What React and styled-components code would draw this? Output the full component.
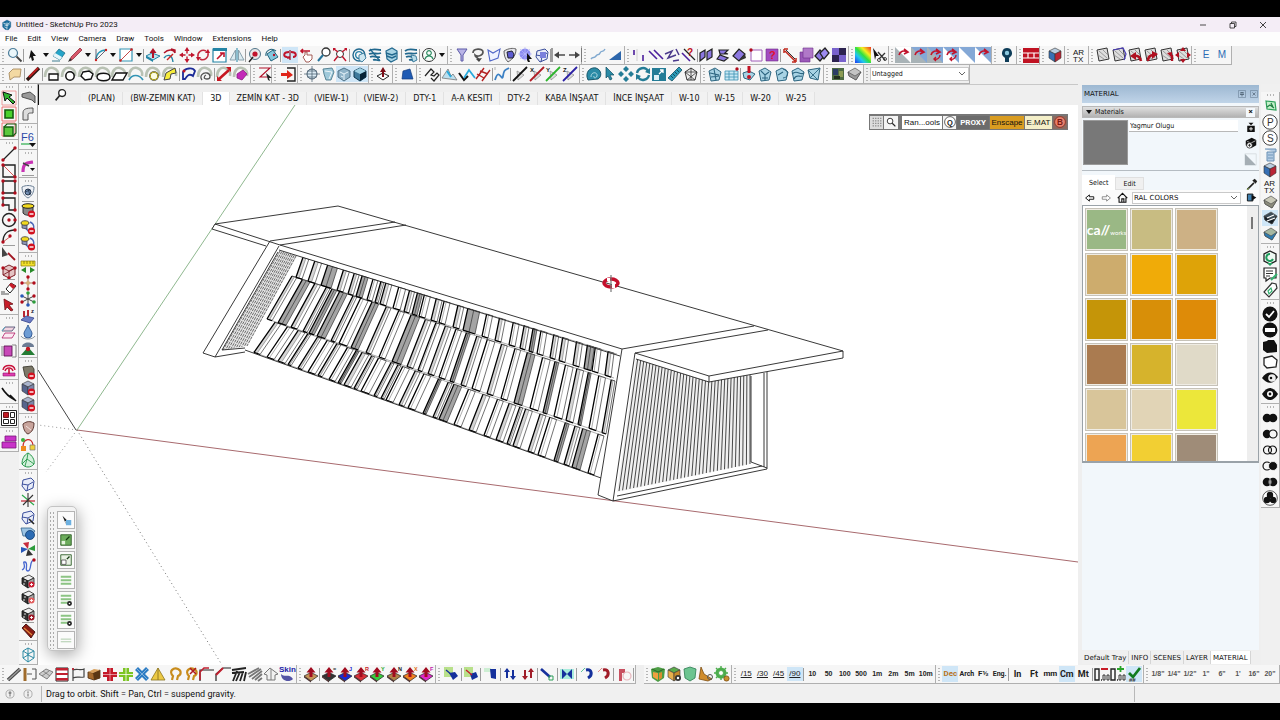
import React from "react";
import styled, { createGlobalStyle, css } from "styled-components";

const GlobalStyle = createGlobalStyle`
  *, *::before, *::after { box-sizing: border-box; }
  html, body { margin: 0; background: #000; }
  body, button, input, select { font-family: Roboto, "Noto Sans", sans-serif; font-size: 8px; color: #111; }
  button { border: 0; padding: 0; margin: 0; background: none; }
  h1, h2 { margin: 0; font-weight: 400; }
`;
const tahoma = '"DejaVu Sans Condensed", "DejaVu Sans", sans-serif';

/* ---------- icon drawing helpers (16 x 16 box) ---------- */
const f = (fill, d) => ({ d, fill });
const s = (stroke, d, w = 1.2) => ({ d, fill: "none", stroke, w });
const fs = (fill, stroke, d, w = 1) => ({ d, fill, stroke, w });
const t = (x, y, text, fill = "#111", size = 7, weight = 700) => ({ text, x, y, fill, size, weight });
const c = (x, y, r) => `M${x - r} ${y}a${r} ${r} 0 1 0 ${2 * r} 0a${r} ${r} 0 1 0 ${-2 * r} 0`;
const box = (x, y, w, h) => `M${x} ${y}h${w}v${h}h${-w}z`;

const push = (col, letter, lc = "#222") => [
  fs(col, "#222", "M1 10l7-3.500 7 3.500-7 5z", 0.7),
  f("#4a3030", "M1 10l7 5v1.500l-7-5z"),
  f("#a00c20", "M6.500 11V6.500H3.500L8 1l4.500 5.500H9.500V11z"),
  ...(letter ? [t(12, 5, letter, lc, 5.5)] : []),
];
const handle = (...parts) => [s("#b9c2b4", "M1 11C1 4 5 1 9 2s6 4 5 8", 2.6), ...parts];
const minus = [f("#d2101f", c(11.5, 12, 3.6)), s("#fff", "M9.500 12h4", 1.4)];
const cube = (a, b, d, st = "#333") => [
  fs(a, st, "M8 1l6 3-6 3-6-3z", 0.6), fs(b, st, "M2 4l6 3v8l-6-4z", 0.6), fs(d, st, "M14 4L8 7v8l6-4z", 0.6),
];
const slab = (a, b) => [fs(a, "#555", "M2 6l7-4 6 4-5 8-7-4z", 0.7), fs(b, "#444", "M2 6l7 4 6-4-5 8-7-4z", 0.6)];
const redDots = (...pts) => pts.map(([x, y]) => f("#b00c1c", c(x, y, 1.7)));
const blueCube = [fs("#e8ecf8", "#3b4f9c", "M3 4l8-2 3 3-1 7-7 3-4-5z", 1), s("#3b4f9c", "M2 8l6 1 5-3M8 9l-1 6", 1)];
const shell = (d) => [fs("#a8d3e4", "#2c6580", "M2 5l6-3 6 4-2 8-8 1z", 1), s("#2c6580", d, 1.1)];
const tornado = [
  s("#21688e", "M2 4c4-3 8-1 12-1M2 7c5-2 7 1 12-1M3 10c4-2 7 1 10 0M6 13c3-1 4 1 7 0", 1.8),
];
const dice = (col) => [
  fs("#eee", "#222", "M2 5l7-3 5 3-6 3z", 0.8), fs("#333", "#111", "M2 5l6 3v7l-6-4z", 0.8), fs("#aaa", "#222", "M14 5L8 8v7l6-4z", 0.8),
  f("#fff", c(5, 8, 0.8) + c(4, 11, 0.8)), f(col, c(11.5, 11.5, 3)), s("#fff", "M10 11.500h3M11.500 10v3", 0.9),
];
const tri = (bg, fg) => [f(bg, box(0, 0, 16, 16)), f(fg, "M0 0L16 16H0z")];
const curlArrow = s("#c0142c", "M4 8c1-4 5-5 8-3M9 2l4 3-4 2", 1.6);
const curlBack = s("#c0142c", "M13 8c0 3-3 5-6 4M9 10l-2 2 2 2", 1.4);
const roughSheet = [fs("#ddd", "#333", "M2 3l10-2 2 11-10 2z", 1), s("#888", "M4 4l8 7M3 8l6 4M8 3l5 5", 0.8)];
const greenTile = [f("#b8e08a", box(1, 1, 9, 10))];

const ICONS = {
  su: [fs("#1b6c9c", "#0d4f7c", "M8 0l6 3v8l-4 5-5-1-4-4V4z", 0.5), s("#fff", "M2 5l6 2 5-3M4 8l4 1 4-2M4 11l4 2M8 4v11", 1)],
  search: [fs("#eaf6fa", "#4f7f9c", c(6, 6, 4.5), 1.2), s("#444", "M9.500 9.500l5 5", 1.8)],
  cursor: [f("#111", "M6 3l5 6-3 0 1 4-2 1-1-4-2 2z")],
  eraser: [fs("#24a4c8", "#12637c", "M8 2l6 4-5 7-7-4z", 0.7), f("#e6f5fa", "M2 9l2-3 7 4-2 3z"), s("#12637c", "M1 14h8", 0.8)],
  pencil: [fs("#d8576a", "#85202e", "M13 1l2 2-9 9-3 2 1-4z", 0.7), f("#333", "M1 15l2-4 2 2z")],
  arc: [s("#2798b7", "M3 13c0-6 4-10 10-10", 1.3), s("#556", "M3 2v11L13 3", 0.9), f("#c22", c(3, 13, 1.2) + c(13, 3, 1.2))],
  rect: [fs("#fff", "#3294b4", box(2, 2, 12, 12), 1.2), s("#b33", "M3 13L13 3", 0.9), f("#c22", c(2.5, 13.5, 1.3) + c(13.5, 2.5, 1.3))],
  pushpull: [fs("#bfe3ee", "#2384a5", "M1 9l6-3 8 3-7 4z", 1), f("#2384a5", "M1 9l7 4v2l-7-4z"), f("#b0142a", "M7 11V6H4.500L8 1l3.500 5H9v5z")],
  offset: [s("#b0142a", "M2 6c5-5 10-3 11 0M9 2l4 1v3", 1.4), s("#2384a5", "M2 11c3-4 8-4 9 4", 1.4), s("#c22", "M5 13l6-6", 1.4)],
  move: [s("#c0142c", "M8 2v12M2 8h12", 1.4), f("#c0142c", "M8 0l2.500 4h-5zM8 16l2.500-4h-5zM0 8l4-2.500v5zM16 8l-4-2.500v5z"), f("#f1f1f1", box(6.5, 6.5, 3, 3))],
  rotate: [s("#c42a3e", "M3 10a5.500 5.500 0 0 1 8-6M13 6a5.500 5.500 0 0 1-8 6", 1.5), f("#c0142c", "M10 6l5 0-2-4zM6 10l-5 0 2 4z")],
  scale: [fs("#fff", "#2384a5", box(1, 2, 13, 13), 1.2), f("#2384a5", box(1, 1, 14, 3)), s("#c0142c", "M5 12l6-6M8 6h4v4", 1.6)],
  flip: [fs("#dcebf0", "#7f99a5", "M1 13L6.500 3v10zM15 13L9.500 3v10z", 0.9), s("#2384a5", "M8 1v14", 1)],
  tape: [fs("#e8e8e8", "#51768a", c(8, 7, 5.5), 1), f("#c0142c", c(8, 7, 2.6)), s("#222", "M2 15l4-5", 1.4)],
  paint: [fs("#84c6dc", "#23637c", "M3 7l6-4 5 7-7 4z", 1), s("#23637c", "M2 9C1 4 7 0 12 4", 1.1), f("#b0142a", c(10, 8, 1.2))],
  orbit: [s("#c0142c", "M7 5C1 5 1 10 5 10M9 5c6 0 6 5 2 5", 2), s("#c0142c", "M5 10.500h3", 2.4), s("#9b1022", "M8 3v10", 1.2)],
  pan: [s("#c0142c", "M2 4h9M4 2L2 4l2 2", 1.6), fs("#fff", "#9a4c46", "M6 8V5h2v3l5 0v4l-3 3H7L4 10z", 0.9)],
  zoom: [fs("#fff", "#333", c(10, 5, 4), 1.3), s("#26749a", "M7 8l-5 6", 2)],
  extents: [fs("#fff", "#333", c(8, 7, 3.5), 1), s("#c0142c", "M2 2l4 3M14 2l-4 3M2 14l4-5M14 14l-4-5", 1.4), f("#c0142c", "M1 1h3L1 4zM15 1h-3l3 3z")],
  wh1: [s("#21688e", c(8, 8, 6), 1.4), s("#2b84ac", c(8, 8, 3.4), 1.4), fs("#cde7f1", "#21688e", "M8 8l5-2 2 5-4 4-3-2z", 0.8)],
  wh2: [...tornado, s("#21688e", "M3 2l10 12", 1.2)],
  wh3: [fs("#a8d3e4", "#21688e", "M2 4l6-3 5 3v8l-6 3-4-3z", 1.2), s("#21688e", "M2 6l6 2 5-2M3 9l5 2 4-2", 1.4)],
  wh4: [...tornado, fs("#b7dbe8", "#21688e", "M8 8l5 1 1 4-4 2z", 0.8)],
  account: [fs("#f6fbf8", "#333", c(8, 8, 6.5), 1), s("#2d8b62", c(8, 6, 2.3) + "M4 12c1-4 7-4 8 0", 1.2)],
  funnel: [fs("#b9b4e6", "#5c5aa8", "M3 2h10l-4 6v6H7V8z", 1)],
  lasso: [s("#555", "M3 6c0-5 10-5 10-1s-6 5-8 3c0 3 4 2 4 6", 1.7), f("#444", "M6 12l6-1-3 4z")],
  poly: [fs("#eff3ff", "#5067c8", "M2 3l5 3 7-4-2 9-8 3z", 1.1)],
  shield: [fs("#e4e4ea", "#555", "M2 4c5-3 9-3 12-2 0 6-3 10-8 13C3 12 2 8 2 4z", 0.9), fs("#5c5ad0", "#223", "M5 5l5-1 2 3-1 4-5 0z", 1)],
  gearsel: [f("#8a8af0", c(7, 7, 5.5)), s("#b9b9f8", "M7 0v14M0 7h14M2 2l10 10M12 2L2 12", 0.7), f("#111", "M9 6l5 6-3 0 1 3-2 0-1-2z")],
  boxsel: [...blueCube, f("#7a80dc", box(6, 5, 6, 6))],
  left: [s("#444", "M1 1v14", 1), s("#555", "M6 8h8", 1.6), f("#444", "M3 8l5-3.500v7z")],
  right: [s("#444", "M15 1v14", 1), s("#555", "M2 8h8", 1.6), f("#444", "M13 8L8 4.500v7z")],
  wave: [s("#7fa8cf", "M1 12c2-3 3 0 5-3s3 0 4-3 3 0 5-4", 1.4)],
  ramp: [f("#2c65aa", "M2 13L14 4v9z")],
  l1: [s("#4b1f9c", "M3 3v5M12 8v6", 1.6), s("#bbb", "M6 2v12", 0.6)],
  l2: [s("#4b1f9c", "M1 4l8 8M6 3l9 9", 1.6)],
  l3: [s("#4b3a8c", "M1 7l7-3-4 7 8-3M9 14l6-1M12 2l3 6", 1.5)],
  l4: [s("#222", "M3 2l11 11", 1.2), s("#4b1f9c", "M1 6l8 8", 1.6), t(6, 9, "?", "#c01020", 10)],
  p1: [fs("#8c78e0", "#222", "M2 6l5-3v7l-5 4zM9 5l5-3v8l-5 3z", 1.2)],
  p2: [fs("#8c78e0", "#222", "M4 3h9l-3 3 3 1H5zM2 12l3-4 8 3-4 3z", 1.2)],
  p3: [fs("#8c78e0", "#222", "M2 9l6-7 6 5-6 7z", 1.2), f("#333", "M8 14l6-7 1 4z")],
  p4: [fs("#fff", "#a05cb8", box(3, 3, 11, 11), 1), redDots([3, 3])[0]],
  p5: [fs("#a24bc0", "#70308c", box(2, 2, 12, 12), 0.6), t(5, 12, "?", "#e01030", 11)],
  q1: [s("#333", "M4 3l9 9", 1), s("#c0281c", "M3 4l10 10M2 2l0 4M2 2h4M14 15v-4M14 15h-4", 1.5)],
  q2: [fs("#9a58b8", "#6b2c8c", box(2, 5, 10, 10), 0.6), fs("#b078c8", "#6b2c8c", box(5, 1, 10, 10), 0.6)],
  q3: [fs("#8c78e0", "#222", "M1 9l5-6 5 5-5 6z", 1.3), fs("#9c8af0", "#222", "M6 6l5-5 4 5-5 6z", 1.3)],
  q4: [f("#7862cc", box(1, 1, 14, 14)), f("#2c2350", box(8, 1, 7, 7) + box(1, 8, 7, 7))],
  scissors: [f("#111", "M2 1l6 8-3 0-1 4z"), s("#333", "M7 5l7 8M14 6l-6 6", 1.3), s("#333", c(14, 12, 1.5) + c(8, 13, 1.5), 0.9)],
  t1: [...tri("#fff", "#a9b3b7"), curlArrow],
  t2: [...tri("#84a8d6", "#a9b3b7"), curlArrow],
  t3: [...tri("#84a8d6", "#a9b3b7"), curlArrow, curlBack],
  t4: [...tri("#84a8d6", "#fff"), curlArrow, curlBack],
  t5: tri("#84a8d6", "#fff"),
  t6: [...tri("#84a8d6", "#fff"), curlArrow],
  pin: [f("#0d3c58", "M8 1a5 5 0 0 1 3 9l-1 1v4H6v-4l-1-1a5 5 0 0 1 3-9z"), f("#8cc9df", c(8, 6, 2.2))],
  brick: [f("#c01222", box(0, 1, 16, 15)), s("#fff", "M0 6h16M0 11h16M5 6v5M11 6v5", 1.2)],
  rgbcube: cube("#b9cde0", "#376fb4", "#ba2434"),
  artx: [t(2, 8, "AR", "#111", 8, 500), t(2, 15, "TX", "#111", 8, 500)],
  sheet: roughSheet,
  sheet2: [...roughSheet, s("#4b3fb8", "M2 3l10-2 3 6-2 6", 1.2)],
  sheet3: [...roughSheet, s("#b01020", "M14 14c-1-4-3-6-7-5", 2.6), f("#b01020", "M3 9l6-4v8z")],
  sheet4: [...roughSheet, s("#b01020", "M5 14c0-4 2-6 6-6", 2.6), f("#b01020", "M15 7L9 4v8z")],
  sheet5: [...roughSheet, s("#b01020", "M13 14V8", 2.4), f("#b01020", "M13 5v6L8 6z")],
  sheet6: [...roughSheet, f("#b01020", "M8 0l3 4H5zM8 16l3-4H5zM0 8l4-3v6zM16 8l-4-3v6z")],
  fold: [fs("#f3d9a2", "#a88b60", "M2 7l4-4 8 0-1 8-6 0-4 3z", 0.9)],
  redpen: [s("#2e1713", "M2 14L14 2", 3.4), s("#ba2020", "M4 11L13 2", 2)],
  hRect: handle(fs("#fff", "#111", box(5, 8, 9, 6), 1.3)),
  hCircle: handle(fs("#fff", "#111", c(9, 10, 4.2), 1.5)),
  hHex: handle(fs("#fff", "#111", "M5 6l6-1 4 3-2 5-6 1-4-4z", 1.4)),
  hEllipse: handle(fs("#fff", "#111", "M2 11c0-5 13-5 13 0s-13 5-13 0", 1.4)),
  hPara: handle(fs("#fff", "#111", "M5 7h11l-4 7H1z", 1.4)),
  hArc: handle(s("#3294b4", "M1 14c3-6 10-6 14 0", 1.7)),
  hYellow: handle(fs("#fdfce0", "#333", c(9, 10, 4), 1.6), s("#e6d41e", c(9, 10, 4), 0.8)),
  hYarrow: handle(fs("#f6ec3b", "#444", "M2 14l2-7 9-5 1 5-5 1-1 5z", 1)),
  blueLoop: [s("#1c2c98", "M2 13V6c2-4 10-5 12-1l-2 5c-4-3-6 0-8 3z", 1.8), f("#c01020", c(3, 5, 1.5))],
  spiral: handle(s("#555", "M5 14c-3-4 1-8 5-7s4 6 0 6-3-3-1-4", 1.3)),
  redArrow: handle(s("#c61620", "M3 13L13 4", 2.6), f("#c61620", "M10 1h5v5zM1 10v5h5z")),
  magenta: handle(fs("#c32ab8", "#861d80", "M4 8l6-4 4 4-5 6-5-2z", 0.8)),
  zline: [s("#b01028", "M2 2h11L3 11h9", 1.1), f("#222", "M9 7l6 5-3 0 1 3-2-1z")],
  importRed: [s("#222", "M7 2h8v13H7", 1.4), f("#df2418", "M1 7h6V4l6 5-6 4v-3H1z")],
  target: [fs("#dcebf5", "#445a6c", c(8, 8, 5), 1), s("#445a6c", "M0 8h16M8 0v16M3 5h10M3 11h10", 0.7)],
  solid1: [fs("#9fc9da", "#4d7a8c", "M3 3l9-1 2 4-3 8-5 0-2-6z", 0.9), s("#fff", "M5 5l7 1-3 7", 0.8)],
  solid2: [fs("#8fb3c8", "#44667c", "M2 5l6-3 6 3v6l-6 4-6-4z", 0.9), s("#e8f4fa", "M4 6l4 2 4-2M8 8v6M5 10l2 1", 1)],
  solid3: [fs("#3f7a9c", "#0e3850", "M2 5l6-3 6 3v6l-6 4-6-4z", 1), f("#072436", "M8 8l6-3v6l-6 4z"), f("#a2d2e4", "M2 5l6-3 6 3-6 3z")],
  ppDark: [fs("#fff", "#222", "M2 10l6-3 6 3-6 4z", 1), f("#7c0f18", "M7 11V6H5l3-5 3 5H9v5z")],
  bluebook: [fs("#1f5bb4", "#123b7c", "M4 5l7-2 3 10H3z", 0.7)],
  steps: [s("#222", "M1 10l6-7 3 3-3 3 3 1 3-3 2 2-5 6-3-3", 1.2)],
  mtn1: [fs("#bcdfee", "#777", "M0 12L6 3l3 7 2-2 4 6z", 0.8), s("#29a9dc", "M5 5l4 6", 2)],
  mtn2: [s("#111", "M0 7l5 7 4-4", 2), s("#29a9dc", "M5 12l5-8 6 8", 1.8)],
  ladder: [s("#b42020", "M1 13L9 2M7 15l8-11M2 8l7 4M5 5l8 3", 1.4)],
  curve: [s("#3c80c4", "M1 14c4-14 7 3 8-4s3-6 6-8", 1.8), s("#888", "M1 1v3", 0.6)],
  ax0: [fs("#ddd", "#888", "M5 5l7 4-6 5z", 0.7), s("#111", "M1 15L15 1", 1.8)],
  axX: [fs("#ddd", "#888", "M5 5l7 4-6 5z", 0.7), s("#b01c24", "M1 15L15 1", 1.8), t(1, 6, "X", "#111", 6)],
  axY: [fs("#ddd", "#888", "M5 5l7 4-6 5z", 0.7), s("#2db42d", "M1 15L15 1", 1.8), t(1, 6, "Y", "#111", 6)],
  axZ: [fs("#ddd", "#888", "M5 5l7 4-6 5z", 0.7), s("#2c20a4", "M1 15L15 1", 1.8), t(1, 6, "Z", "#111", 6)],
  snail: [fs("#2b8ba6", "#104e62", "M1 11C0 4 6 1 10 2c6 2 6 9 2 11L2 14z", 0.9), s("#c9e8f0", "M5 11c0-6 7-5 6-1-1 3-4 2-3 0", 0.8)],
  tealCursor: [fs("#2b8ba6", "#104e62", "M4 1l8 8-4 0 2 4-2 1-2-4-2 2z", 0.7)],
  tealMove: [f("#247c96", "M8 0l3 3-3 3-3-3zM8 10l3 3-3 3-3-3zM3 5l3 3-3 3-3-3zM13 5l3 3-3 3-3-3z")],
  tealRot: [s("#247c96", "M2 7c1-5 8-7 11-2M14 9c-1 5-8 7-11 2", 2.4), f("#247c96", "M15 2v6l-5-2zM1 14V8l5 2z")],
  tealScale: [f("#247c96", box(1, 2, 14, 13)), f("#dff0f5", box(3, 9, 5, 5)), s("#fff", "M8 8l4-4M9 4h3v3", 1.3)],
  tealRuler: [fs("#2b9bb8", "#104e62", "M1 12L12 1l3 3L5 15z", 0.8), s("#0b3a4a", "M4 10l2 2M6 8l2 2M8 6l2 2M10 4l2 2", 0.8)],
  wire: [fs("#eee", "#222", "M2 6l6-4 6 4-2 8H4z", 0.9), s("#333", "M2 6l10 8M14 6L4 14M8 2v12M2 6h12", 0.8)],
  sh1: shell("M3 7l9 2M4 11l8-1M7 3l2 11"),
  sh2: [fs("#c9e8f4", "#3c92b4", "M1 5h13v9H1z", 0.8), s("#3c92b4", "M1 8h13M1 11h13M5 5v9M10 5v9", 0.8), ...redDots([13, 3])],
  sh3: [fs("#a8d3e4", "#2c6580", "M2 7l6-2 6 3-5 6-6-2z", 1), f("#c21224", "M6.500 0h3v7h-3z" + c(8, 11, 2))],
  sh4: shell("M4 5l4 4 4-3M8 9v5M5 12h6"),
  sh5: shell("M9 3a4 4 0 0 1 0 9M4 9l5-3"),
  sh6: shell("M2 8c5-5 8 2 12-1M4 13c2-5 5-2 8-3"),
  sh7: [fs("#a8d3e4", "#2c6580", "M2 4l12-2-2 12-8-2z", 1), s("#2c6580", "M14 2L4 12M2 4l10 10", 0.9)],
  photo: [f("#4d6b43", box(2, 2, 12, 12)), f("#2c3e66", box(3, 3, 5, 6)), f("#8c9c54", box(9, 5, 4, 6)), f("#23301f", box(4, 10, 6, 3))],
  greySlab: slab("#c4c4c4", "#9a9a9a"),

  greenCursor: [s("#e88", box(1, 1, 14, 14), 0.8), fs("#2fb52f", "#111", "M2 2l9 3-3 2 6 5-2 2-6-6-2 3z", 1)],
  greenSq: [s("#e66", box(1, 1, 14, 14), 0.9), fs("#4cd02c", "#165c10", box(4, 4, 8, 8), 1.6)],
  greenSq2: [s("#e66", box(1, 1, 13, 13), 0.9), fs("#5bc83c", "#165c10", box(3, 5, 9, 9), 1.4), s("#165c10", "M3 5l3-3h9v9l-3 3", 1.1)],
  lineDot: [s("#222", "M2 14L14 2", 1.3), ...redDots([2, 14], [14, 2])],
  sqDiag: [s("#222", box(2, 2, 12, 12), 1.4), s("#c44", "M2 2l12 12", 0.9), ...redDots([2, 2], [14, 14])],
  sqDots: [s("#222", box(2, 2, 12, 12), 1.4), ...redDots([2, 2], [14, 2], [2, 14], [14, 14])],
  lShape: [s("#222", "M2 2h12v12H8V9H2z", 1.3), ...redDots([2, 9], [14, 14], [2, 2])],
  circDot: [s("#222", c(8, 8, 6.5), 1.4), ...redDots([8, 8], [14, 8])],
  arcDot: [s("#222", "M2 14C2 6 7 2 14 2", 1.4), s("#c44", "M2 14L10 8", 0.9), ...redDots([2, 14], [14, 2], [9, 8])],
  slashArrow: [f("#444", "M1 1l6 8-6 2z"), s("#a01420", "M7 7l7 7", 1.8)],
  cageRed: [fs("#e4c4c4", "#7c1c24", "M2 5l6-3 6 3v7l-6 3-6-3z", 1), s("#7c1c24", "M2 5l6 3 6-3M8 8v7M2 12l12-7", 0.9), ...redDots([2, 5], [14, 5], [8, 15])],
  eraserDark: [fs("#fff", "#222", "M5 9l5-6 5 3-6 7z", 1), f("#c81c28", "M10 3l5 3-3 3-4-4z"), s("#555", "M0 14h8M0 12h4", 1)],
  redCursor: [fs("#c81c28", "#6c1016", "M3 2l9 5-4 1 4 5-2 1-4-4-2 3z", 0.8)],
  layers: [fs("#f1d4e0", "#557", "M4 3h10l-3 4H1z", 0.9), fs("#fbe9f2", "#a05", "M4 9h10l-3 5H1z", 0.7), s("#5aa9c4", "M1 7l3-4", 1)],
  magBox: [fs("#c848b8", "#5c1450", box(3, 3, 8, 10), 0.9), s("#777", "M11 2h4v12h-4M1 3v10", 0.9)],
  magPaint: [s("#c8143c", "M2 8c1-6 11-6 12 0M4 9c1-4 7-4 8 0", 1.4), fs("#e03cb0", "#8a1468", "M2 11h12v3H2z", 0.6), s("#c8143c", "M8 7v5", 1.6)],
  arcPen: [s("#111", "M1 2c3 5 7 9 13 12M9 9l6 6", 1.6)],
  redGrid: [fs("#fff", "#222", box(0.5, 0.5, 15, 15), 1), fs("#c01822", "#6c1016", box(2.5, 2.5, 5, 5), 1), s("#222", box(9.5, 2.5, 4, 5) + box(2.5, 9.5, 5, 4) + box(9.5, 9.5, 4, 4), 1)],
  magRects: [fs("#c832c8", "#7a187a", "M4 2h11v5H4zM1 8h14v6H1z", 0.8)],

  sheet7: [fs("#9a9a9a", "#444", "M2 4l8-2 5 4v7l-3-3-10-3z", 0.9)],
  pipe: [fs("#ddd", "#555", "M3 14V7c0-4 3-5 10-5v5c-4 0-5 0-5 2v5z", 1)],
  f6: [t(1, 9, "F6", "#2c48a8", 11, 500), s("#2cae4c", "M1 12h9", 1.2), f("#111", "M9 11h7l-3.500 4z")],
  magHose: [s("#c832b4", "M3 14C3 5 6 5 13 4", 3.2), s("#444", "M3 5l6 3", 1.5), f("#111", "M10 10h5l-2.500 3z")],
  shieldBlue: [fs("#eef1f6", "#6b7f94", "M2 3c4-2 8-2 12 0 0 5-2 9-6 11C4 12 2 8 2 3z", 1), fs("#7490b4", "#26364c", c(8, 8, 3), 1), s("#26364c", "M5 8l5-2M8 5l2 6", 0.8)],
  canMinus: [fs("#888", "#222", "M3 4v7c2 3 8 3 10 0V4z", 0.9), fs("#f1d81e", "#222", "M2 4c0-3 12-3 12 0s-12 3-12 0", 1), ...minus],
  canMinus2: [s("#4d68b8", "M10 3c5 2 4 6 3 10M4 7l5 6", 1.4), fs("#8a93b4", "#334", "M2 4v5l5 1V4z", 0.7), fs("#f1d81e", "#333", "M1 4c0-3 8-3 8 0s-8 3-8 0", 0.8), ...minus],
  rulerY: [fs("#f2e02a", "#8a7a10", box(1, 2, 14, 5), 0.7), s("#6c5f0c", "M4 2v3M7 2v3M10 2v3M13 2v3", 0.7), f("#288a28", "M1 11l5-3v6zM15 11l-5-3v6z")],
  crossRed: [s("#b06c50", "M8 2v12M2 8h12", 1), ...redDots([8, 2], [8, 14], [2, 8], [14, 8]), f("#d8b078", c(8, 8, 2))],
  crossMulti: [s("#444", "M8 2v12M2 5l12 6M14 5L2 11", 1), f("#2c9c3c", c(8, 2, 1.8) + c(14, 11, 1.8)), f("#2858b8", c(2, 5, 1.8) + c(8, 14, 1.8)), ...redDots([14, 5], [2, 11])],
  terrainZ: [fs("#6c7cc4", "#33438c", "M1 12l5-4 8 2-4 5z", 0.8), s("#b01020", "M4 3v6M8 2v6", 1.8), t(11, 5, "z", "#223", 6)],
  drop: [fs("#6d9cd4", "#2c5490", "M8 1c2 5 4 6 4 9a4 4 0 0 1-8 0c0-3 2-4 4-9z", 0.9), s("#8894a0", "M1 12c2 4 12 4 14 0", 1)],
  tree: [f("#6c7c94", "M2 7c0-6 12-6 12 0z"), f("#247c34", "M1 15l7-8 7 8z"), f("#c01822", c(8, 9, 2.2))],
  bagMinus: [fs("#7c7868", "#3c3a30", "M3 3l9-1 2 3v7c-3 3-7 3-9 0z", 0.9), ...minus],
  cubeMinus: [...cube("#aab4cc", "#56648c", "#7c88ac"), ...minus],
  redShield: [fs("#c8a49c", "#5c3a34", "M3 4c4-3 7-3 11-1 0 6-2 9-6 11-3-1-5-6-5-10z", 1), s("#f1e0dc", "M6 6l5 4", 1)],
  orangePath: [s("#cc2c2c", "M3 11C3 2 12 1 13 9", 1.2), f("#ee8a1c", box(1, 10, 5, 5)), f("#38b038", c(3, 4, 2)), fs("#f1d23c", "#777", box(10, 9, 5, 5), 0.7)],
  greenEgg: [fs("#d4f1dc", "#28984c", "M8 1c4 2 7 7 6 11-3 4-9 4-12 0C2 7 4 3 8 1z", 1), s("#28984c", "M2 12l5-5 7 5M7 7l1-6M5 14l2-7", 0.9)],
  bcube: blueCube,
  bcube2: [...blueCube, s("#222", "M9 10l5 5", 1.6)],
  starAxes: [s("#2ca84c", "M2 3l12 10", 1.2), s("#c02030", "M1 9h14", 1.2), s("#333", "M8 1v14M13 3L3 13", 1.1)],
  blueSphere: [fs("#9cc4e4", "#36648c", "M1 3h10l4 3-4 5H3z", 0.8), fs("#2c6cb4", "#123c70", c(10, 10, 4.5), 0.8)],
  fan: [f("#c82c3c", "M8 8L3 2l6-1z"), f("#2c9c3c", "M8 8l7-4v6z"), f("#2858b8", "M8 8L1 6v6z"), f("#333", "M8 8l5 6-7 1z")],
  blueWave: [s("#4868d0", "M2 13c6-3-1-9 3-8s-1 9 3 9 1-11 6-11", 1.3), ...redDots([14, 3])],
  dice1: dice("#c81c30"), dice2: dice("#e05c5c"), dice3: dice("#9c1424"),
  brown: [fs("#8c1c14", "#3c100c", "M2 5l4-4 9 8-4 6z", 0.9), s("#e08c3c", "M4 5l8 7", 1.1)],
  cyanBox: [s("#2f8ba4", "M3 4l5-3 6 3-6 3zM3 4v3M3 11l5-3 6 3-6 4zM3 7v4M14 4v7M8 7v8M8 1v7", 1)],

  gTile: [fs("#c4f0ca", "#2ca058", "M4 3l9 1 1 8-9-1z", 1.2), s("#1e7c40", "M5 9l3-2 4 3M9 5l2 4", 1.2)],
  letterP: [fs("#fff", "#444", c(8, 8, 7.2), 1), t(5, 12, "P", "#333", 10, 500)],
  letterS: [fs("#fff", "#444", c(8, 8, 7.2), 1), t(5, 12, "S", "#333", 10, 500)],
  scroll: [fs("#b4cce4", "#6a90b4", "M3 3h11v3H5v9h7V6", 1), s("#6a90b4", "M6 9h5M6 12h5", 0.9)],
  slabA: slab("#c9c9b8", "#8c8c7c"), slabB: [...slab("#3c4c58", "#141c24"), s("#fff", "M5 8l7-3M5 11l8-3", 1.2)], slabC: slab("#a6b7a0", "#2f7cb0"),
  greenHex: [fs("#eef8f2", "#222", "M8 1l6 3v7l-6 3-6-3V4z", 1.3), s("#1e9c5c", "M8 4a3.500 3.500 0 1 0 3 5", 2), f("#1e9c5c", "M5 13h6l-3 3z")],
  listPen: [fs("#fff", "#222", "M2 2h12v10H8l-4 3v-3H2z", 1.2), s("#333", "M4 5h7M4 7.500h7M4 10h4", 1), s("#34b070", "M9 14l6-6", 2)],
  tagGreen: [fs("#fff", "#333", "M10 1l4 1 1 4-8 9-5-5z", 1.2), s("#34b070", "M6 9l3-3 1 3-3 3z", 1.2)],
  checkDisc: [f("#111", c(8, 8, 7.5)), s("#fff", "M4 8l3 3 5-6", 1.8)],
  minusDisc: [f("#111", c(8, 8, 7.5)), f("#fff", box(3, 6, 10, 4))],
  tagBlack: [f("#111", "M1 4l4-1 1-1 6 0 3 5v7l-10 1-4-3z")],
  tagWhite: [fs("#fff", "#222", "M2 4l8-2 5 4-1 7-9 1-3-3z", 1.3)],
  eye1: [f("#111", "M0 8c5-7 11-7 16-1-5 8-11 7-16 1z"), f("#eee", c(10, 8, 3.8)), f("#111", c(9, 8, 1.3))],
  eye2: [f("#111", "M0 8c5-8 11-8 16 0-5 8-11 8-16 0z"), f("#fff", c(8, 8, 3)), f("#111", c(8, 8, 1.4))],
  union: [f("#111", c(5, 8, 4.3) + c(11, 8, 4.3))],
  sub1: [f("#111", c(5, 8, 4.2)), fs("#f5f5f5", "#111", c(11, 8, 4), 1.2)],
  inter: [s("#111", c(5.5, 8, 4), 1.2), s("#111", c(10.5, 8, 4), 1.2)],
  sub2: [s("#111", c(5, 8, 4), 1.2), fs("#111", "#fff", c(11, 8, 4.5), 0.8)],
  split: [f("#111", c(5, 8, 4.3) + c(11, 8, 4.3)), fs("#fff", "#fff", "M8 5c1.500 2 1.500 4 0 6-1.500-2-1.500-4 0-6z", 0.5), s("#111", "M8 5v6", 0.8)],
  tri3: [fs("#fff", "#444", c(8, 8, 7.3), 0.9), f("#111", c(8, 5, 3.2) + c(5, 10, 3.2) + c(11, 10, 3.2))],

  stair: [s("#444", "M2 14L14 3", 3.6), s("#999", "M2 14L14 3", 1.6)],
  chair: [s("#a06c2c", "M3 2v13", 3), s("#555", "M5 8h5M14 3v10M10 3h4M10 13h4", 1.1)],
  isoGrey: [fs("#ccc", "#777", "M1 8l7-5 7 3-6 7z", 0.9), s("#777", "M5 5l7 5M4 10l7-5", 0.8)],
  redRows: [fs("#fff", "#222", box(2, 2, 12, 13), 1), f("#c02030", box(2, 2, 12, 2.5) + box(2, 7, 12, 2) + box(2, 12, 12, 2.5))],
  flag: [s("#444", "M3 2v13M3 4c4-2 7 1 11-1v8c-4 1-7-1-11 1", 1.2), f("#c02030", c(3, 3, 1.1))],
  crate: [fs("#a4692c", "#4c2c10", "M2 6l5 1 7-3v8l-6 2-6-2z", 0.8), f("#5a3614", "M7 7l7-3v8l-6 2z"), f("#d8a05c", "M2 6l6-3 6 1-7 3z")],
  redPlus: [f("#c41828", "M5 2h6v4h4v5h-4v4H5v-4H1V6h4z"), s("#fff", "M1 8.500h14M8 2v13", 0.5)],
  greenPlus: [f("#7cc424", "M5 2h6v4h4v5h-4v4H5v-4H1V6h4z"), s("#fff", "M1 8.500h14M8 2v13", 0.8)],
  bluePlus: [f("#2c7cc4", "M4 1l4 4 4-4 3 3-4 4 4 4-3 3-4-4-4 4-3-3 4-4-4-4z"), s("#fff", "M3 3l10 10M13 3L3 13", 0.4)],
  yTri: [fs("#ecc944", "#8c7420", "M8 2l7 12H1z", 0.8), s("#8c7420", "M8 2v12", 0.9)],
  hook: [s("#c88c1c", "M5 14l1-4C1 5 7 1 11 3s3 6 0 7l-1 4", 2.2)],
  hookX: [s("#c88c1c", "M5 14l1-4C1 5 7 1 11 3s3 6 0 7l-1 4", 2.2), s("#b01820", "M7 2l6 6M13 2L7 8", 1.5)],
  bend1: [s("#222", "M1 15V4h14", 1.2), s("#c02030", "M1 14V6l4-4h5", 1.6)],
  bend2: [s("#222", "M1 15V8l7-6h8", 1.2), s("#c02030", "M1 9l7-7", 2)],
  hatch1: [s("#222", "M1 4l14-2M1 7l12-1M2 15L6 5M5 15l4-9M9 15l3-9M13 15l2-9", 1.8)],
  hatch2: [s("#777", "M1 8L12 2M2 11L14 3M5 13l10-8M8 14l7-6M11 15l4-3", 1.8)],
  roof: [fs("#f1f1f1", "#777", "M1 8l6-6 8 6-3 1v5H4V9z", 1), s("#777", "M8 3v11", 0.9)],
  skin: [f("#5454a4", "M2 8c4 4 8-1 12 5-4 4-12 2-12-5z"), t(0, 6, "Skin", "#1c1ca8", 8)],
  pp0: push("#c49458"), pp1: push("#333", "=", "#111"), pp2: push("#1c28d0", "J", "#1c28d0"), pp3: push("#d83038", "R", "#c81c28"),
  pp4: push("#38cc3c", "Y", "#1ca828"), pp5: push("#b08048", "N", "#222"), pp6: push("#f08020", "X", "#e06c10"), pp7: push("#e028c8", "F", "#c018a8"),
  v1: [...greenTile, f("#15309c", "M6 7l6-1 3 4-5 4z"), s("#15309c", "M3 4l6 5", 1.4)],
  v2: [...greenTile, f("#15309c", "M7 8l6-2 2 5-6 3z"), s("#c81c28", "M3 4l6 5", 1.4)],
  v3: [f("#cdeed3", box(1, 2, 7, 4)), f("#15309c", "M7 3h6v10l-5-1z")],
  v4: [s("#15309c", "M5 3v9M11 4v9", 2), f("#15309c", "M2 6l3-4 3 4zM8 10h6l-3 4z")],
  v5: [s("#a01c28", "M5 4v9M11 3v9", 2), f("#a01c28", "M2 10h6l-3 4zM8 6l3-4 3 4z")],
  v6: [s("#15309c", "M2 3l9 8", 2.6), s("#2ca058", box(10, 10, 4, 4), 1)],
  v7: [f("#a8ecdc", box(1, 3, 14, 10)), f("#15309c", "M3 3l5 5-5 5zM13 3L8 8l5 5z")],
  v8: [s("#15309c", "M7 4c6-1 7 5 2 8", 3), s("#5cc49c", "M2 6l4-4", 1)],
  v9: [s("#a01c28", "M7 4c6-1 7 5 2 8", 3), s("#e08c8c", "M2 6l4-4", 1)],
  v10: [f("#c85060", "M3 3h6v4H6v8H3z"), s("#e6b6bc", c(11, 10, 4), 1.2)],
  g1: [f("#4c9c44", "M1 3l7-2 7 2-1 9-6 4-6-4z"), f("#f0a040", "M3 6l5 1v7l-5-3z"), f("#d88c30", "M9 7l3-1v6l-3 2z"), s("#245c20", "M2 3l6 3 6-3", 0.8)],
  g2: [...cube("#5cac4c", "#e8b04c", "#c88c2c"), f("#333", c(12, 12, 3)), f("#fff", c(12, 12, 1.2))],
  g3: [fs("#6cc490", "#2c7c50", "M2 3l6-2 6 2-1 9-5 3-5-3z", 0.8)],
  g4: [fs("#d08c2c", "#7c4c10", "M3 1l3 7 8 5-4 2-9-2z", 0.8), s("#555", c(12, 11, 2.5), 1)],
  g5: [s("#4cac4c", c(7, 7, 4), 3), s("#4cac4c", "M7 0v14M0 7h14M2 2l10 10M12 2L2 12", 1.4), f("#fff", c(7, 7, 2)), fs("#c89030", "#7c4c10", c(12.5, 12.5, 2.6), 0.8)],
  decMinus: [s("#222", "M2 3h4v11H2zM8 14h1", 1.4), s("#222", "M10 9h2v5h-2zM14 9h2v5h-2z", 0.9), s("#c81c28", "M8 3h7", 2)],
  decPlus: [s("#222", "M2 3h4v11H2zM8 14h1", 1.4), s("#222", "M10 9h2v5h-2zM14 9h2v5h-2z", 0.9), s("#28a428", "M8 3h7M11.500 0v6", 1.8)],
  check: [s("#127c20", "M3 7l4 4L14 2", 2.8), t(3, 16, "##", "#333", 6)],

  bulb: [s("#888", c(8, 8, 6.5), 1), f("#888", c(8, 6, 2.4) + "M7 8h2v4H7z")],
  person: [s("#888", c(8, 8, 6.5), 1), f("#888", c(8, 5, 1.3) + "M7 7h2v5H7z")],
  winMin: [s("#222", "M2 8h12", 1.6)],
  winMax: [s("#222", box(2, 5, 9, 9) + "M5 5V2h9v9h-3", 1.6)],
  winClose: [s("#222", "M2 2l12 12M14 2L2 14", 1.7)],
  handleFind: [fs("#fff", "#222", c(10, 5, 4.2), 1.6), s("#222", "M7 8l-5 6", 2)],
  dots: [f("#888", [2, 6, 10, 14].map((y) => [2, 6, 10, 14].map((x) => box(x - 1, y - 1, 2, 2)).join("")).join(""))],
  find: [fs("#fff", "#222", c(6.5, 6.5, 4.5), 1.4), s("#222", "M10 10l5 5", 2)],
  discQ: [fs("#fff", "#333", c(8, 8, 7.2), 1), t(4, 12, "Q", "#222", 10, 600)],
  discB: [fs("#e8806c", "#8c3024", c(8, 8, 7.2), 1.2), t(4, 12, "B", "#7c1810", 11, 700)],
  pinBox: [s("#5d7388", box(1, 1, 14, 14), 1), s("#345", "M5 5h6M6 5v4M10 5v4M4 9h8M8 9v4", 1.2)],
  closeBox: [s("#5d7388", box(1, 1, 14, 14), 1), s("#345", "M5 5l6 6M11 5l-6 6", 1.1)],
  addPane: [f("#111", "M4 1h8L8 5z" + box(2, 6, 12, 10)), s("#fff", "M8 8v6M5 11h6", 1.4)],
  addMat: [f("#111", "M1 5l8-4 6 3v7l-7 4-7-4z"), s("#fff", "M3 6l5 2 6-3M8 8v3", 0.9), fs("#fff", "#111", c(6, 11, 3.8), 1), s("#111", "M4 11h4M6 9v4", 1)],
  half: [f("#a5aeb4", "M1 1l14 14H1z"), s("#d5dade", "M1 1h14v14", 1)],
  dropper: [s("#222", "M3 14l8-8", 2), f("#222", "M9 3l4 4 2-3-3-3z"), s("#8a4", "M2 15l3-3", 1.2)],
  back: [fs("#fff", "#111", "M1 8l6-5v3h7v4H7v3z", 1.5)],
  fwd: [fs("#fff", "#777", "M15 8L9 3v3H2v4h7v3z", 1.3)],
  home: [s("#111", "M1 9l7-7 7 7M3 8v7h10V8M7 15v-5h3v5", 1.6)],
  details: [fs("#3f7fae", "#111", box(2, 3, 8, 10), 1.4), f("#111", "M8 4l7 4-7 5z")],
  fPick: [f("#222", "M4 3l6 6-3 0 1 4z"), f("#6cb0e0", box(8, 8, 6, 6))],
  fGreen: [fs("#6cac5c", "#2c5c24", box(2, 2, 12, 12), 1), f("#e4f4dc", box(3, 9, 4, 4)), s("#143c10", "M8 8l4-4", 1.4)],
  fWhite: [fs("#e8f1e4", "#2c5c24", box(2, 2, 12, 12), 1), fs("#fff", "#333", box(3, 8, 5, 5), 0.8), s("#143c10", "M9 7l3-3", 1.6)],
  fRows: [f("#8cc484", box(2, 3, 12, 2.4) + box(2, 7, 12, 2.4) + box(2, 11, 12, 2.4))],
  fRowsA: [f("#8cc484", box(2, 2, 12, 2.4) + box(2, 6, 12, 2.4) + box(2, 10, 8, 2.4)), f("#222", c(12, 12, 2.8)), f("#fff", c(12, 12, 0.9))],
  fFlat: [s("#9cc098", "M2 7h12M2 10h12", 0.9)],
};

const SvgIcon = styled.svg`
  display: block;
  flex: none;
  overflow: visible;
`;

function Icon({ name, size = 16 }) {
  return (
    <SvgIcon width={size} height={size} viewBox="0 0 16 16" aria-hidden="true">
      {name === "rainbow" && (
        <>
          <defs>
            <linearGradient id="rb" x1="0" y1="1" x2="1" y2="0">
              <stop offset="0" stopColor="#2038f0" /><stop offset="0.300" stopColor="#20c8f0" /><stop offset="0.500" stopColor="#30e040" />
              <stop offset="0.700" stopColor="#f4f020" /><stop offset="1" stopColor="#f03020" />
            </linearGradient>
          </defs>
          <rect width="16" height="16" fill="url(#rb)" />
        </>
      )}
      {(ICONS[name] || []).map((p, i) =>
        p.text ? (
          <text key={i} x={p.x} y={p.y} fill={p.fill} fontSize={p.size} fontWeight={p.weight} fontFamily="Liberation Sans, sans-serif">{p.text}</text>
        ) : (
          <path key={i} d={p.d} fill={p.fill} stroke={p.stroke} strokeWidth={p.w} />
        )
      )}
    </SvgIcon>
  );
}

/* ---------- frame ---------- */
const Page = styled.div`
  display: flex;
  flex-direction: column;
  min-height: 100vh;
  padding: 17px 0;
  background: #000;
  overflow: hidden;
`;
const TitleBar = styled.header`
  display: flex;
  align-items: center;
  gap: 4px;
  height: 15px;
  padding: 0 10px 0 2px;
  background: #f4edf6;
`;
const WindowTitle = styled.h1`
  flex: 1;
  font-size: 8px;
  line-height: 12px;
  white-space: nowrap;
`;
const WindowButton = styled.button`
  display: grid;
  place-items: center;
  width: 26px;
  height: 14px;
  &:last-child { width: 14px; margin-left: 6px; }
`;
const MenuBar = styled.nav`
  display: flex;
  height: 14px;
  background: #fdfdfd;
`;
const MenuItem = styled.button`
  padding: 0 5px;
  line-height: 14px;
  white-space: nowrap;
`;
const Band = styled.div`
  display: flex;
  height: 19px;
  background: #efefef;
`;
const Toolbar = styled.div`
  display: flex;
  flex-direction: ${(p) => (p.$vertical ? "column" : "row")};
  align-items: center;
  justify-content: space-between;
  flex: none;
  background: #f6f6f6;
  border: 0 solid #b0b0b0;
  ${(p) =>
    p.$vertical
      ? css`height: ${p.$size}px; border-bottom-width: 1px; border-right-width: 1px; padding: 0 0 1px;`
      : css`width: ${p.$size}px; border-right-width: 1px; border-bottom-width: 1px; padding-right: 1px;`}
`;
const Grip = styled.span`
  flex: none;
  ${(p) =>
    p.$vertical
      ? css`width: 11px; height: 6px; background: radial-gradient(circle, #b5b5b5 0 1px, transparent 1px) center / 3px 6px;`
      : css`width: 6px; height: 13px; background: radial-gradient(circle, #b5b5b5 0 1px, transparent 1px) center / 6px 3px;`}
`;
const Divider = styled.span`
  flex: none;
  background: #9c9c9c;
  ${(p) => (p.$vertical ? css`width: 12px; height: 1px;` : css`width: 1px; height: 13px;`)}
`;
const Tool = styled.button`
  display: grid;
  place-items: center;
  flex: none;
  width: ${(p) => (p.$narrow ? 8 : 16)}px;
  height: 16px;
  background: ${(p) => (p.$on ? "#cfe6f7" : "transparent")};
`;
const Caret = styled.span`
  border: 3px solid transparent;
  border-top: 4px solid #111;
  border-bottom: 0;
`;
const TextTool = styled(Tool)`
  display: flex;
  justify-content: center;
  align-items: center;
  font-family: ${(p) => (p.$unit ? 'Roboto, sans-serif' : '"Liberation Sans", sans-serif')};
  font-size: ${(p) => p.$px || 8}px;
  font-weight: ${(p) => (p.$light ? 400 : 700)};
  color: ${(p) => p.$color || "#222"};
  line-height: 12px;
  white-space: nowrap;
`;
const Angle = styled(TextTool)`
  height: 14px;
  font-size: 8px;
  font-weight: 400;
  text-decoration: underline;
`;

/* Items: "|" divider, "v" caret, "*name" pressed tool, "^name" angle, {label} text tool */
function Bar({ items, size, vertical, label }) {
  return (
    <Toolbar $size={size} $vertical={vertical} role="toolbar" aria-label={label}>
      <Grip $vertical={vertical} />
      {items.map((it, i) => {
        if (typeof it === "object")
          return (
            <TextTool key={i} $px={it.px} $color={it.color} $light={it.light} $on={it.on} $unit={it.unit}>
              {it.label}
            </TextTool>
          );
        if (it === "|") return <Divider key={i} $vertical={vertical} />;
        if (it === "v") return <Tool key={i} $narrow aria-label="More"><Caret /></Tool>;
        if (it[0] === "^") return <Angle key={i} $on={it === "^/90"}>{it.slice(1)}</Angle>;
        const on = it[0] === "*";
        const name = on ? it.slice(1) : it;
        return <Tool key={i} $on={on} aria-label={name}><Icon name={name} size={16} /></Tool>;
      })}
    </Toolbar>
  );
}
const list = (str) => str.split(" ");

const ROW1 = [
  [448, list("search | cursor v eraser pencil v arc v rect v | pushpull offset move rotate scale flip | tape paint | *orbit pan zoom extents | wh1 wh2 wh3 | wh4 | account v")],
  [134, list("funnel lasso poly shield gearsel boxsel | left right")],
  [43, list("wave ramp")],
  [224, list("l1 l2 l3 l4 | p1 p2 p3 p4 p5 | q1 q2 q3 q4")],
  [40, list("rainbow scissors")],
  [103, list("t1 t2 t3 t4 t5 t6")],
  [25, ["pin"]],
  [23, ["brick"]],
  [25, ["rgbcube"]],
  [24, ["artx"]],
  [103, list("sheet sheet2 sheet3 sheet4 sheet5 sheet6")],
  [40, [{ label: "E", px: 10, color: "#2c6cb4", light: true }, { label: "M", px: 10, color: "#2c6cb4", light: true }]],
];
const ROW2 = [
  [251, list("fold | redpen | hRect hCircle hHex hEllipse hPara hArc hYellow hYarrow | blueLoop spiral | redArrow magenta")],
  [21, ["zline"]],
  [26, ["importRed"]],
  [71, list("target solid1 *solid2 *solid3")],
  [24, ["ppDark"]],
  [24, ["bluebook"]],
  [163, list("steps | mtn1 mtn2 ladder | curve | ax0 axX axY axZ")],
  [121, list("snail tealCursor tealMove tealRot tealScale tealRuler wire")],
  [123, list("sh1 sh2 | sh3 sh4 sh5 sh6 sh7")],
  [40, list("photo greySlab")],
];
const LEFT1 = [
  [56, list("greenCursor greenSq greenSq2")],
  [175, list("lineDot sqDiag sqDots lShape circDot arcDot | slashArrow cageRed | eraserDark redCursor")],
  [65, list("layers magBox magPaint")],
  [24, ["arcPen"]],
  [24, ["redGrid"]],
  [24, ["magRects"]],
];
const LEFT2 = [
  [40, list("sheet7 pipe")],
  [26, ["f6"]],
  [28, ["magHose", "|"]],
  [75, list("shieldBlue | canMinus canMinus2 canMinus2")],
  [105, list("rulerY crossRed crossMulti terrainZ drop tree")],
  [56, list("bagMinus cubeMinus cubeMinus")],
  [56, list("redShield orangePath greenEgg")],
  [171, list("bcube starAxes bcube2 blueSphere fan blueWave dice1 dice2 dice3 | brown")],
  [24, ["cyanBox"]],
];
const RIGHT = [
  [152, list("gTile letterP letterS scroll rgbcube artx slabA *slabB slabC")],
  [56, list("greenHex listPen tagGreen")],
  [104, list("checkDisc minusDisc tagBlack tagWhite eye1 eye2")],
  [104, list("union sub1 inter sub2 split tri3")],
];
const txt = (arr, px, extra) => arr.map((label) => ({ label, px, ...extra }));
const BOTTOM_A = [
  [297, list("stair chair isoGrey redRows flag crate redPlus greenPlus bluePlus yTri hook hookX bend1 bend2 hatch1 hatch2 roof skin")],
  [139, list("pp0 | pp1 pp2 pp3 pp4 pp5 pp6 pp7")],
  [200, list("v1 | v2 | v3 | v4 v5 | v6 | v7 | v8 v9 | v10 |")],
];
const unit = { unit: true };
const BOTTOM_B = [
  [88, list("g1 g2 g3 g4 g5")],
  [204, [...list("^/15 ^/30 ^/45 ^/90 |"), ...txt(["10", "50", "100", "500", "1m", "2m", "5m", "10m"], 7)]],
  [208, [
    { label: "Dec", px: 8, color: "#b87424", on: true, ...unit }, ...txt(["Arch"], 7, unit), ...txt(["F½"], 8, unit), ...txt(["Eng."], 7, unit), "|",
    ...txt(["In", "Ft"], 9, unit), ...txt(["mm"], 8, unit),
    { label: "Cm", px: 9, on: true, ...unit }, { label: "Mt", px: 9, ...unit }, "|", "decMinus", "decPlus", "*check",
  ]],
  [136, txt(['1/8"', '1/4"', '1/2"', '1"', '6"', "1'", '16"', '20"'], 7, { color: "#555" })],
];

const TagPicker = styled.form`
  display: flex;
  align-items: center;
  width: 106px;
  border-right: 1px solid #b0b0b0;
  border-bottom: 1px solid #b0b0b0;
`;
const Dropdown = styled.select`
  flex: 1;
  min-width: 0;
  height: ${(p) => p.$h || 14}px;
  padding: 0 12px 0 1px;
  appearance: none;
  border: 1px solid #c9c9c9;
  border-radius: 0;
  font-family: ${(p) => (p.$wide ? '"DejaVu Sans", sans-serif' : tahoma)};
  font-size: 7px;
  background: #fff url("data:image/svg+xml,%3Csvg xmlns='http://www.w3.org/2000/svg' width='8' height='6'%3E%3Cpath d='M1 1l3 3 3-3' fill='none' stroke='%23666'/%3E%3C/svg%3E") no-repeat right 2px center;
`;

/* ---------- main area ---------- */
const Main = styled.main`
  display: flex;
  flex: 1;
  min-height: 581px;
  background: #efefef;
`;
const ToolColumn = styled.aside`
  width: 19px;
  flex: none;
  padding-top: ${(p) => p.$top || 0}px;
  background: #f0f0f0;
`;
const Work = styled.section`
  display: flex;
  flex-direction: column;
  flex: 1;
  min-width: 0;
`;
const SceneBar = styled.div`
  display: flex;
  align-items: flex-end;
  height: 21px;
  background: #efefef;
  border-top: 1px solid #c8c8c8;
  border-left: 1px solid #111;
`;
const FindScene = styled.button`
  display: grid;
  place-items: center;
  width: 42px;
  height: 20px;
`;
const SceneTab = styled.button`
  height: 13px;
  padding: 0 7px;
  border-right: 1px solid #e2e2e2;
  font-family: "DejaVu Sans", sans-serif;
  font-size: 8px;
  line-height: 13px;
  white-space: nowrap;
  background: ${(p) => (p.$active ? "#fff" : "#f2f2f2")};
`;
const Viewport = styled.div`
  position: relative;
  flex: 1;
  background: #fff;
  overflow: hidden;
`;
const Drawing = styled.svg`
  position: absolute;
  inset: 0;
  width: 100%;
  height: 100%;
`;
const QuickBar = styled.div`
  position: absolute;
  top: 9px;
  right: 10px;
  display: flex;
  align-items: center;
  gap: 1px;
  width: 199px;
  height: 16px;
  padding: 1px;
  background: #777;
`;
const QuickButton = styled.button`
  display: grid;
  place-items: center;
  width: ${(p) => p.$w}px;
  height: 13px;
  font-family: ${(p) => (p.$bold ? "Roboto" : '"Liberation Sans"')}, sans-serif;
  font-size: 8px;
  white-space: nowrap;
  background: ${(p) => p.$bg || "#f4f4f4"};
  color: ${(p) => p.$fg || "#111"};
  font-weight: ${(p) => (p.$bold ? 700 : 400)};
`;
const Palette = styled.div`
  position: absolute;
  left: 9px;
  bottom: 14px;
  display: flex;
  gap: 2px;
  padding: 4px 1px 1px;
  border: 1px solid #c4c4c4;
  border-radius: 5px;
  background: #f3f3f3;
  box-shadow: 1px 4px 16px rgba(0, 0, 0, 0.35);
`;
const PaletteGrip = styled.span`
  width: 6px;
  background: radial-gradient(circle, #aaa 0 1px, transparent 1px) 0 0 / 3px 4px;
`;
const PaletteButtons = styled.div`
  display: flex;
  flex-direction: column;
  gap: 2px;
`;
const PaletteButton = styled.button`
  display: grid;
  place-items: center;
  width: 18px;
  height: 18px;
  border: 1px solid #b4b4b4;
  background: #fbfbfb;
`;

/* ---------- tray ---------- */
const Tray = styled.aside`
  display: flex;
  flex-direction: column;
  flex: none;
  width: 183px;
  padding: 0 2px 0 4px;
  background: #efefef;
`;
const TrayHead = styled.div`
  display: flex;
  align-items: center;
  gap: 2px;
  height: 18px;
  margin-top: 1px;
  padding: 0 0 0 2px;
  background: linear-gradient(#9db8d2, #c0d4e8);
`;
const TrayTitle = styled.h2`
  flex: 1;
  font-family: "DejaVu Sans", sans-serif;
  font-size: 7px;
`;
const SmallButton = styled.button`
  display: grid;
  place-items: center;
  width: ${(p) => p.$w || 10}px;
  height: 12px;
`;
const TrayBody = styled.div`
  flex: 1;
  display: flex;
  flex-direction: column;
  background: #f2f7fb;
  font-family: ${tahoma};
  font-size: 7px;
`;
const SectionHead = styled.div`
  display: flex;
  align-items: center;
  gap: 3px;
  height: 12px;
  margin-top: 3px;
  padding: 0 3px;
  background: linear-gradient(#e0e0e0, #b2b2b2);
  border: 1px solid #b8b8b8;
`;
const SectionName = styled.span`
  flex: 1;
`;
const CloseSection = styled.button`
  width: 9px;
  height: 9px;
  line-height: 8px;
  background: #f4f8fc;
  font-weight: 700;
`;
const MaterialHead = styled.div`
  display: flex;
  align-items: flex-start;
  gap: 1px;
  height: 53px;
  padding: 2px 0 0 1px;
  border-bottom: 1px solid #b5bcc2;
`;
const Preview = styled.div`
  width: 45px;
  height: 45px;
  background: #787878;
  border: 1px solid #9a9a9a;
`;
const NameField = styled.input`
  flex: 1;
  min-width: 0;
  height: 12px;
  padding: 0 1px;
  border: 0;
  border-bottom: 1px solid #b8b8b8;
  font-family: ${tahoma};
  font-size: 7px;
  background: #fff;
`;
const IconStack = styled.div`
  display: flex;
  flex-direction: column;
  gap: 4px;
  padding: 1px 2px 0 5px;
`;
const PaneTabs = styled.div`
  display: flex;
  align-items: flex-end;
  height: 19px;
  padding-right: 1px;
`;
const PaneTab = styled.button`
  height: ${(p) => (p.$active ? 15 : 13)}px;
  padding: 0 7px;
  font-family: ${tahoma};
  font-size: 7px;
  background: ${(p) => (p.$active ? "#fff" : "#f0f0f0")};
  border: ${(p) => (p.$active ? 0 : 1)}px solid #e0e0e0;
`;
const Spacer = styled.span`
  flex: 1;
`;
const NavRow = styled.div`
  display: flex;
  align-items: center;
  gap: 4px;
  height: 15px;
  padding: 0 2px;
  background: #fbfbfb;
`;
const SwatchScroll = styled.div`
  display: flex;
  height: 258px;
  overflow: hidden;
  border: 1px solid #9aa2a8;
  border-bottom-width: 2px;
  background: #fff;
`;
const SwatchGrid = styled.div`
  display: grid;
  grid-template-columns: repeat(3, 43px);
  grid-auto-rows: 43px;
  gap: 2px;
  flex: 1;
  padding: 2px;
`;
const Swatch = styled.button`
  background: ${(p) => p.$c};
  border: 1px solid #c6c2b8;
  box-shadow: inset 0 0 0 1px #efece4;
  color: #fff;
  white-space: nowrap;
`;
const Brand = styled.span`
  color: #fff;
  font-family: Lato, sans-serif;
  font-size: 14px;
  font-weight: 700;
`;
const BrandSmall = styled.span`
  font-size: 6px;
  font-weight: 400;
`;
const ScrollTrack = styled.div`
  width: 11px;
  padding: 11px 5px 0 4px;
  background: #eeeeee;
`;
const ScrollThumb = styled.div`
  height: 12px;
  background: #777;
`;
const TrayTabs = styled.div`
  display: flex;
  align-items: center;
  height: 15px;
  background: #efefef;
`;
const TrayTab = styled.button`
  height: 13px;
  padding: 0 2px;
  font-family: "DejaVu Sans", sans-serif;
  font-size: 7px;
  border-right: 1px solid #d5d5d5;
  white-space: nowrap;
  background: ${(p) => (p.$active ? "#fff" : "#f0f0f0")};
`;

const StatusBar = styled.footer`
  display: flex;
  align-items: center;
  gap: 8px;
  height: 19px;
  padding-left: 5px;
  background: #f0f0f0;
`;
const StatusText = styled.span`
  flex: 1;
  padding-left: 4px;
  border-left: 1px solid #b8b8b8;
  font-size: 9px;
  line-height: 16px;
  white-space: nowrap;
`;
const StatusValue = styled.span`
  width: 146px;
  height: 16px;
  border-left: 1px solid #b8b8b8;
`;

/* ---------- model ---------- */
const lerp = (a, b, k) => [a[0] + (b[0] - a[0]) * k, a[1] + (b[1] - a[1]) * k];
const FACADE = [
  {
    q: [[302, 257], [617, 354], [614, 378], [295, 277]],
    bars: [[296, 6, 1], [308, 7, 1], [321, 10, 2], [337, 6, 1], [348, 5, 1], [356, 6, 2], [367, 5, 0], [375, 3, 1], [380, 6, 1], [393, 7, 0], [404, 5, 1], [412, 5, 2], [419, 6, 0], [431, 6, 1], [439, 6, 0], [453, 6, 1], [463, 12, 2], [482, 6, 0], [495, 6, 1], [509, 6, 0], [520, 5, 1], [529, 4, 2], [537, 6, 0], [550, 5, 1], [559, 6, 1], [573, 6, 1], [584, 7, 2], [592, 6, 0], [605, 6, 1]],
  },
  {
    q: [[292, 276], [615, 381], [606, 434], [267, 319]],
    bars: [[267, 5, 1], [278, 8, 2], [291, 6, 1], [303, 4, 1], [309, 5, 2], [317, 8, 2], [331, 4, 1], [339, 8, 0], [351, 7, 2], [366, 5, 1], [379, 6, 0], [392, 9, 2], [407, 6, 1], [418, 4, 0], [428, 6, 1], [439, 6, 0], [450, 4, 2], [461, 5, 1], [472, 8, 0], [487, 6, 1], [501, 6, 0], [514, 8, 2], [530, 8, 0], [543, 4, 2], [554, 8, 0], [566, 7, 1], [578, 3, 2], [589, 7, 0], [602, 4, 1]],
  },
  {
    q: [[274, 322], [604, 436], [594, 475], [253, 352]],
    bars: [[254, 6, 1], [267, 7, 0], [278, 7, 1], [288, 3, 1], [298, 4, 1], [308, 7, 0], [318, 4, 1], [329, 6, 0], [338, 3, 2], [344, 7, 1], [354, 3, 1], [361, 8, 0], [374, 3, 1], [381, 3, 1], [386, 7, 0], [399, 5, 1], [408, 7, 0], [423, 3, 2], [433, 4, 1], [439, 8, 2], [454, 7, 0], [469, 7, 1], [484, 6, 0], [496, 7, 1], [507, 3, 1], [513, 7, 1], [528, 6, 1], [538, 7, 0], [554, 4, 2], [564, 5, 1], [572, 8, 2], [588, 6, 0]],
  },
];
const seg = (a, b) => `M${a[0].toFixed(1)} ${a[1].toFixed(1)}L${b[0].toFixed(1)} ${b[1].toFixed(1)}`;
const pt = (a) => `${a[0].toFixed(1)} ${a[1].toFixed(1)}`;

function facadePaths() {
  const out = { thin: "", thick: "", fine: "", light: "", dark: "" };
  FACADE.forEach(({ q, bars }) => {
    const [tl, tr, br, bl] = q;
    out.fine += seg(tl, tr) + seg(bl, br);
    bars.forEach(([x, w, shade]) => {
      const u0 = (x - bl[0]) / (br[0] - bl[0]);
      const u1 = (x + w - bl[0]) / (br[0] - bl[0]);
      const at = (u) => [lerp(tl, tr, u), lerp(bl, br, u)];
      const [a, d] = at(u0);
      const [b, e] = at(u1);
      const [m, k] = at(u0 + (u1 - u0) * 0.5);
      out.thick += seg(a, d) + seg(d, e);
      out.thin += seg(b, e) + seg(a, b);
      if (shade === 2) {
        out.dark += `M${pt(a)}L${pt(b)}L${pt(e)}L${pt(d)}Z`;
        out.thin += seg(m, k);
      } else if (shade === 1) {
        out.light += `M${pt(a)}L${pt(m)}L${pt(k)}L${pt(d)}Z`;
        out.fine += seg(m, k);
      } else {
        const [g, h] = at(u0 + (u1 - u0) * 0.35);
        out.fine += seg(g, h);
      }
    });
  });
  return out;
}
function hatch(tl, tr, br, bl, n) {
  let d = "";
  for (let i = 0; i <= n; i++) d += seg(lerp(tl, tr, i / n), lerp(bl, br, i / n));
  return d;
}
const F = facadePaths();
const EDGES =
  "M215 224L338 206L843 351L709 376L635 353M215 224L212 229L266 246M215 224L280 245L622 349M270 241L395 222M280 245L406 225" +
  "M279 250L620 356M622 349L754 326M635 353L768 330M843 351V358L709 382V376M709 382L636 359" +
  "M270 241L203 353L215 357L279 246M215 357L245 352M222 350L245 348M278 252L222 350M245 350L601 478M613 501L635 353" +
  "M622 349L598 495L613 501M613 501L767 469M617 496L762 466M767 372V469M764 373V467M751 376V462L767 468";

function Model() {
  return (
    <Drawing viewBox="38 105 1040 560" preserveAspectRatio="xMidYMid slice" role="img" aria-label="3D model">
      <path d="M77 430L295 105" stroke="#8fb88f" fill="none" />
      <path d="M77 430L1078 562" stroke="#a86a6e" fill="none" />
      <path d="M38 370L76 430" stroke="#444" fill="none" />
      <path d="M77 430L38 425M77 430L46 472" stroke="#999" strokeDasharray="1 3" fill="none" />
      <path d="M77 430L222 665" stroke="#777" strokeDasharray="1 3" fill="none" />
      <path d="M280 251L297 256L247 346L223 350Z" fill="#e6e6e6" />
      <path d={hatch([280, 251], [296, 256], [247, 346], [223, 350], 9)} stroke="#333" strokeWidth="0.7" strokeDasharray="3 1" fill="none" />
      <path d="M636 357L750 372V464L617 492Z" fill="#f0f0f0" />
      <path d={hatch([638, 357], [750, 374], [750, 464], [619, 491], 36)} stroke="#333" strokeWidth="0.9" fill="none" />
      <path d={F.light} fill="#d4d4d4" />
      <path d={F.dark} fill="#a4a4a4" />
      <path d={F.fine} stroke="#777" strokeWidth="0.6" fill="none" />
      <path d={F.thin} stroke="#333" strokeWidth="0.7" fill="none" />
      <path d={F.thick} stroke="#000" strokeWidth="1.300" fill="none" />
      <path d="M338 206L843 351V358L709 382L636 359L279 250L212 229L215 224Z" fill="#fff" />
      <path d="M622 349L598 495L613 501L635 353Z" fill="#fff" />
      <path d={EDGES} stroke="#222" strokeWidth="0.9" fill="none" />
      <g transform="translate(601 273)">
        <ellipse cx="10" cy="10" rx="7" ry="4" fill="none" stroke="#c4102c" strokeWidth="3.500" />
        <path d="M11 11h3v4h-3zM6 5l3 0v3h-3z" fill="#fff" />
        <path d="M10 2v17" stroke="#777" strokeWidth="1.200" />
      </g>
    </Drawing>
  );
}

const SCENES = ["(PLAN)", "(BW-ZEMIN KAT)", "3D", "ZEMİN KAT - 3D", "(VIEW-1)", "(VIEW-2)", "DTY-1", "A-A KESITI", "DTY-2", "KABA İNŞAAT", "İNCE İNŞAAT", "W-10", "W-15", "W-20", "W-25"];
const COLORS = ["#9ab885", "#c8bc82", "#cdb185", "#cdac6d", "#f0ab08", "#dea308", "#c59508", "#d88f08", "#de8b08", "#aa7b50", "#d6b32c", "#e0dac8", "#d8c59a", "#e1d4b6", "#ece73a", "#eda453", "#f2cf33", "#9f8c78"];
const MENUS = ["File", "Edit", "View", "Camera", "Draw", "Tools", "Window", "Extensions", "Help"];

const bars = (rows, vertical, label) => rows.map(([size, items], i) => <Bar key={i} size={size} items={items} vertical={vertical} label={`${label} ${i + 1}`} />);

export default function App() {
  return (
    <Page>
      <GlobalStyle />
      <TitleBar>
        <Icon name="su" size={10} />
        <WindowTitle>Untitled - SketchUp Pro 2023</WindowTitle>
        <WindowButton aria-label="Minimize"><Icon name="winMin" size={8} /></WindowButton>
        <WindowButton aria-label="Restore"><Icon name="winMax" size={8} /></WindowButton>
        <WindowButton aria-label="Close"><Icon name="winClose" size={8} /></WindowButton>
      </TitleBar>
      <MenuBar>{MENUS.map((m) => <MenuItem key={m}>{m}</MenuItem>)}</MenuBar>
      <Band>{bars(ROW1, false, "Top")}</Band>
      <Band>
        {bars(ROW2, false, "Drawing")}
        <TagPicker>
          <Grip />
          <Dropdown aria-label="Tag" defaultValue="u"><option value="u">Untagged</option></Dropdown>
        </TagPicker>
      </Band>
      <Main>
        <ToolColumn>{bars(LEFT1, true, "Left")}</ToolColumn>
        <ToolColumn>{bars(LEFT2, true, "Side")}</ToolColumn>
        <Work>
          <SceneBar>
            <FindScene aria-label="Search scenes"><Icon name="handleFind" size={13} /></FindScene>
            {SCENES.map((n) => <SceneTab key={n} $active={n === "3D"}>{n}</SceneTab>)}
          </SceneBar>
          <Viewport>
            <Model />
            <QuickBar>
              <QuickButton $w={13} $bg="#ddd" aria-label="Move bar"><Icon name="dots" size={10} /></QuickButton>
              <QuickButton $w={14} aria-label="Find"><Icon name="find" size={10} /></QuickButton>
              <Spacer />
              <QuickButton $w={40} $bg="#fff">Ran...ools</QuickButton>
              <QuickButton $w={13} aria-label="Q"><Icon name="discQ" size={12} /></QuickButton>
              <QuickButton $w={32} $bg="#6c6c6c" $fg="#fff" $bold>PROXY</QuickButton>
              <QuickButton $w={34} $bg="#d99c20">Enscape</QuickButton>
              <QuickButton $w={27} $bg="#f4efc8">E.MAT</QuickButton>
              <QuickButton $w={14} $bg="#8c6a60" aria-label="B"><Icon name="discB" size={12} /></QuickButton>
            </QuickBar>
            <Palette>
              <PaletteGrip />
              <PaletteButtons>
                {list("fPick fGreen fWhite fRows fRowsA fRowsA fFlat").map((n, i) => (
                  <PaletteButton key={i} aria-label={n}><Icon name={n} size={14} /></PaletteButton>
                ))}
              </PaletteButtons>
            </Palette>
          </Viewport>
        </Work>
        <Tray>
          <TrayHead>
            <TrayTitle>MATERIAL</TrayTitle>
            <SmallButton aria-label="Pin"><Icon name="pinBox" size={8} /></SmallButton>
            <SmallButton aria-label="Close"><Icon name="closeBox" size={8} /></SmallButton>
          </TrayHead>
          <TrayBody>
            <SectionHead>
              <Caret />
              <SectionName>Materials</SectionName>
              <CloseSection aria-label="Close section">×</CloseSection>
            </SectionHead>
            <MaterialHead>
              <Preview />
              <NameField aria-label="Material name" defaultValue="Yagmur Olugu" />
              <IconStack>
                <SmallButton $w={13} aria-label="Secondary pane"><Icon name="addPane" size={10} /></SmallButton>
                <SmallButton $w={13} aria-label="Create material"><Icon name="addMat" size={12} /></SmallButton>
                <SmallButton $w={13} aria-label="Default material"><Icon name="half" size={13} /></SmallButton>
              </IconStack>
            </MaterialHead>
            <PaneTabs>
              <PaneTab $active>Select</PaneTab>
              <PaneTab>Edit</PaneTab>
              <Spacer />
              <SmallButton $w={14} aria-label="Sample paint"><Icon name="dropper" size={13} /></SmallButton>
            </PaneTabs>
            <NavRow>
              <SmallButton $w={12} aria-label="Back"><Icon name="back" size={10} /></SmallButton>
              <SmallButton $w={12} aria-label="Forward"><Icon name="fwd" size={10} /></SmallButton>
              <SmallButton $w={12} aria-label="In model"><Icon name="home" size={11} /></SmallButton>
              <Dropdown $h={12} $wide aria-label="Collection" defaultValue="r"><option value="r">RAL COLORS</option></Dropdown>
              <SmallButton $w={12} aria-label="Details"><Icon name="details" size={11} /></SmallButton>
            </NavRow>
            <SwatchScroll>
              <SwatchGrid>
                {COLORS.map((col, i) => (
                  <Swatch key={i} $c={col} aria-label={i ? `Colour ${i + 1}` : undefined}>
                    {i === 0 && <Brand>ca//<BrandSmall>works</BrandSmall></Brand>}
                  </Swatch>
                ))}
              </SwatchGrid>
              <ScrollTrack><ScrollThumb /></ScrollTrack>
            </SwatchScroll>
          </TrayBody>
          <TrayTabs>
            {["Default Tray", "INFO", "SCENES", "LAYER", "MATERIAL"].map((n) => <TrayTab key={n} $active={n === "MATERIAL"}>{n}</TrayTab>)}
          </TrayTabs>
        </Tray>
        <ToolColumn $top={8}>{bars(RIGHT, true, "Right")}</ToolColumn>
      </Main>
      <Band>
        {bars(BOTTOM_A, false, "Bottom")}
        <Spacer />
        {bars(BOTTOM_B, false, "Units")}
      </Band>
      <StatusBar>
        <Icon name="bulb" size={10} />
        <Icon name="person" size={10} />
        <StatusText>Drag to orbit. Shift = Pan, Ctrl = suspend gravity.</StatusText>
        <StatusValue />
      </StatusBar>
    </Page>
  );
}
